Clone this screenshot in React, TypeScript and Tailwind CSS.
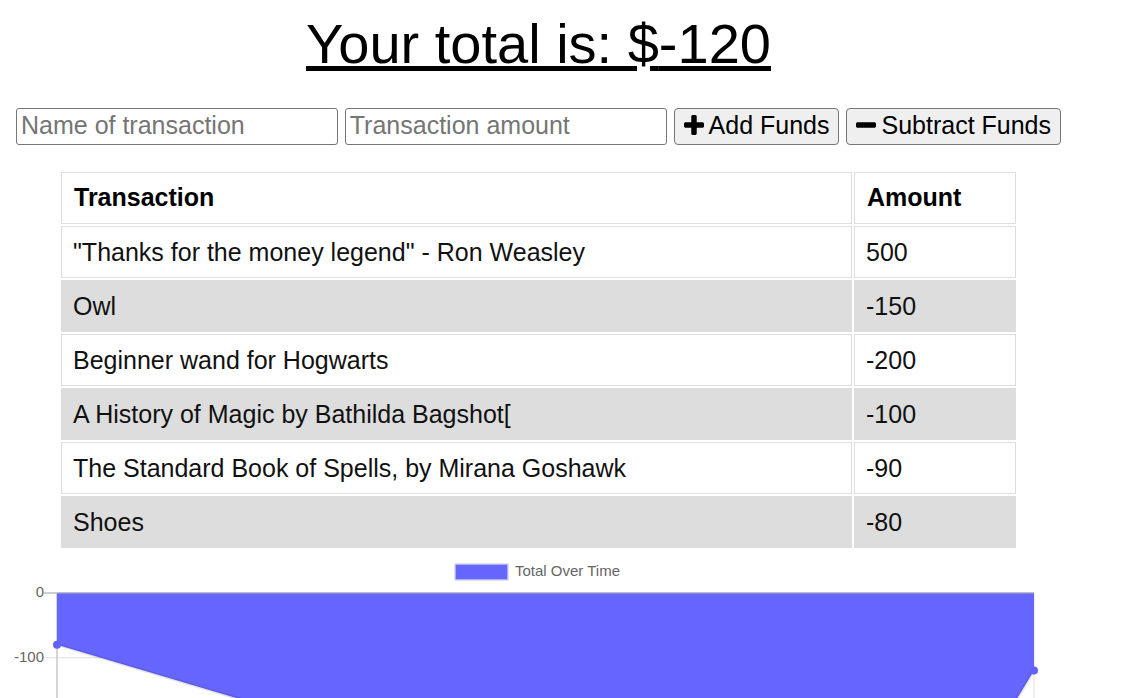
import { useState } from "react";

type Transaction = { name: string; value: number };

const initialTransactions: Transaction[] = [
  { name: '"Thanks for the money legend" - Ron Weasley', value: 500 },
  { name: "Owl", value: -150 },
  { name: "Beginner wand for Hogwarts", value: -200 },
  { name: "A History of Magic by Bathilda Bagshot[", value: -100 },
  { name: "The Standard Book of Spells, by Mirana Goshawk", value: -90 },
  { name: "Shoes", value: -80 },
];

const fieldClass =
  "h-[37px] min-w-0 flex-1 rounded-[3px] border border-[#767676] bg-white px-1 pb-[2px] placeholder:text-[#757575]";
const buttonClass =
  "flex h-[37px] shrink-0 items-center gap-[5px] rounded-[4px] border border-[#767676] bg-[#efefef] px-[9px] pb-[3px]";
const headClass = "border border-[#dddddd] px-3 pb-[3px] font-bold";
const cellClass = "border border-[#dddddd] px-[11px]";

function PlusIcon() {
  return (
    <svg viewBox="192 128 1408 1408" className="mb-px size-5" fill="currentColor" aria-hidden="true">
      <path d="M1600 736v192q0 40-28 68t-68 28h-416v416q0 40-28 68t-68 28h-192q-40 0-68-28t-28-68v-416h-416q-40 0-68-28t-28-68v-192q0-40 28-68t68-28h416v-416q0-40 28-68t68-28h192q40 0 68 28t28 68v416h416q40 0 68 28t28 68z" />
    </svg>
  );
}

function MinusIcon() {
  return (
    <svg viewBox="192 128 1408 1408" className="mb-px size-5" fill="currentColor" aria-hidden="true">
      <path d="M1600 736v192q0 40-28 68t-68 28h-1216q-40 0-68-28t-28-68v-192q0-40 28-68t68-28h1216q40 0 68 28t28 68z" />
    </svg>
  );
}

const left = 57;
const right = 1034;
const zero = 42;
const unit = 0.646;
const chartHeight = 147;

function TotalChart({ transactions }: { transactions: Transaction[] }) {
  // Transactions are listed newest first; the running total goes oldest first.
  let sum = 0;
  const totals = [...transactions].reverse().map((t) => (sum += t.value));
  const step = (right - left) / Math.max(totals.length - 1, 1);
  const points = totals.map((t, i) => ({ x: left + i * step, y: zero - t * unit }));
  const line = points.map((p) => `${p.x},${p.y}`).join(" L");
  const ticks = [0, -100];

  return (
    <svg
      viewBox={`0 0 1139 ${chartHeight}`}
      className="block w-full"
      role="img"
      aria-label="Total Over Time"
      fontFamily="Liberation Sans, Arial, sans-serif"
      fontSize="15"
      fill="#666666"
    >
      <rect x="455" y="13" width="53" height="16" fill="#6666ff" stroke="#d4d4e8" strokeWidth="1.3" />
      <text x="515" y="25">Total Over Time</text>
      {ticks.map((t) => (
        <g key={t}>
          <line
            x1="44"
            x2={right}
            y1={zero - t * unit}
            y2={zero - t * unit}
            stroke={t === 0 ? "#bfbfbf" : "#e5e5e5"}
            strokeWidth="1.3"
          />
          <text x="44" y={zero - t * unit + 4} textAnchor="end">
            {t}
          </text>
        </g>
      ))}
      {points.map((p, i) => (
        <line
          key={i}
          x1={p.x}
          x2={p.x}
          y1={zero}
          y2={chartHeight}
          stroke={i === 0 ? "#bfbfbf" : "#e5e5e5"}
          strokeWidth="1.3"
        />
      ))}
      <path d={`M${left},${zero} L${line} L${right},${zero} Z`} fill="#6666ff" />
      <line x1={left} x2={right} y1={zero} y2={zero} stroke="#a9a9bd" />
      <path d={`M${line}`} fill="none" stroke="#000000" strokeOpacity="0.1" strokeWidth="3" />
      {points.map((p, i) => (
        <circle key={i} cx={p.x} cy={p.y} r="4" fill="#6262f6" />
      ))}
    </svg>
  );
}

export default function App() {
  const [transactions, setTransactions] = useState(initialTransactions);
  const [name, setName] = useState("");
  const [amount, setAmount] = useState("");
  const total = transactions.reduce((acc, t) => acc + t.value, 0);

  const record = (sign: number) => {
    if (!name || !amount) return;
    setTransactions([{ name, value: sign * Number(amount) }, ...transactions]);
    setName("");
    setAmount("");
  };

  return (
    <main className="bg-white font-['Liberation_Sans',Arial,sans-serif] text-[25px] leading-7 text-black">
      <div className="pr-[78px] pl-4">
        <h1 className="pt-3 text-center text-[56px] leading-16 underline decoration-[5px]">
          Your total is: ${total}
        </h1>
        <form className="mt-8 flex gap-[7px]" onSubmit={(e) => e.preventDefault()}>
          <input
            type="text"
            aria-label="Name of transaction"
            placeholder="Name of transaction"
            className={fieldClass}
            value={name}
            onChange={(e) => setName(e.target.value)}
          />
          <input
            type="number"
            aria-label="Transaction amount"
            placeholder="Transaction amount"
            className={fieldClass}
            value={amount}
            onChange={(e) => setAmount(e.target.value)}
          />
          <button type="button" className={buttonClass} onClick={() => record(1)}>
            <PlusIcon />
            Add Funds
          </button>
          <button type="button" className={buttonClass} onClick={() => record(-1)}>
            <MinusIcon />
            Subtract Funds
          </button>
        </form>
        <div className="px-[43px] pt-[25px] pb-px">
          <table className="w-full border-separate border-spacing-[2px] text-left">
            <thead>
              <tr className="h-[52px]">
                <th className={headClass}>Transaction</th>
                <th className={`w-[162px] ${headClass}`}>Amount</th>
              </tr>
            </thead>
            <tbody className="text-[#111111]">
              {transactions.map((t, i) => (
                <tr key={i} className="h-[52px] even:bg-[#dddddd]">
                  <td className={cellClass}>{t.name}</td>
                  <td className={cellClass}>{t.value}</td>
                </tr>
              ))}
            </tbody>
          </table>
        </div>
      </div>
      <TotalChart transactions={transactions} />
    </main>
  );
}
